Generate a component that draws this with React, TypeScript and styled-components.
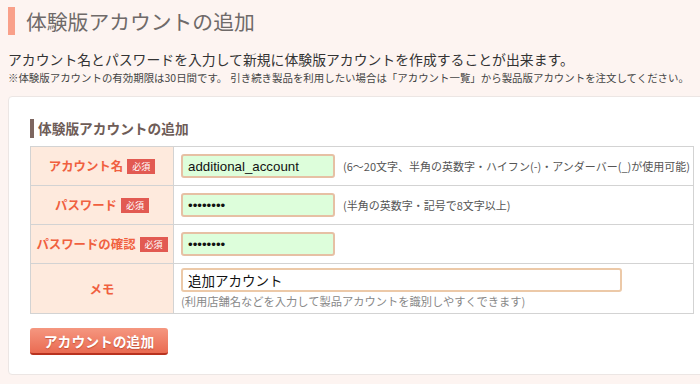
import React from "react";
import styled, { createGlobalStyle } from "styled-components";

const GlobalStyle = createGlobalStyle`
  html, body {
    margin: 0;
    padding: 0;
    background: #fdf4f1;
    overflow: hidden;
  }
  body {
    font-family: "Noto Sans CJK JP", "Noto Sans", sans-serif;
    color: #333;
  }
`;

const Page = styled.div`
  width: 700px;
  height: 384px;
  padding: 7px 0 0 8px;
  box-sizing: border-box;
`;

const PageTitle = styled.h1`
  margin: 0;
  border-left: 7px solid #f9a08a;
  padding-left: 11px;
  height: 28px;
  font-size: 20.8px;
  line-height: 28px;
  font-weight: 400;
  color: #6f6a69;
`;

const Lead = styled.p`
  margin: 14px 0 0;
  font-size: 13.85px;
  line-height: 20px;
  color: #333;
`;

const Note = styled.p`
  margin: 0;
  font-size: 10.45px;
  line-height: 17px;
  color: #444;
  white-space: nowrap;
`;

const Gap = styled.span`
  display: inline-block;
  width: 3px;
`;

const Card = styled.section`
  margin-top: 10px;
  width: 700px;
  background: #fff;
  border: 1px solid #ece6e4;
  border-radius: 4px;
  padding: 22px 0 19px 21px;
  box-sizing: border-box;
`;

const SectionTitle = styled.h2`
  margin: 0;
  height: 19px;
  border-left: 4px solid #7d6660;
  padding-left: 4px;
  font-size: 13.7px;
  line-height: 19px;
  font-weight: 700;
  color: #6e5c57;
`;

const FormTable = styled.table`
  margin-top: 8px;
  width: 664px;
  border-collapse: collapse;
  border: 1px solid #d3d3d3;
`;

const Row = styled.tr<{ $h: number }>`
  height: ${(p) => p.$h}px;
`;

const LabelCell = styled.th`
  width: 142px;
  padding: 0;
  background: #feeadd;
  border: 1px solid #d3d3d3;
  text-align: center;
  vertical-align: middle;
  font-size: 12.4px;
  font-weight: 700;
  color: #f0603f;
  white-space: nowrap;
`;

const Required = styled.span`
  display: inline-block;
  margin-left: 4px;
  padding: 0 5px;
  height: 15px;
  line-height: 15px;
  background: #e25a52;
  color: #fff;
  font-size: 9px;
  font-weight: 400;
  vertical-align: 1px;
`;

const ValueCell = styled.td`
  padding: 0 0 0 7px;
  border: 1px solid #d3d3d3;
  vertical-align: middle;
`;

const MemoCell = styled(ValueCell)`
  vertical-align: top;
  padding-top: 3px;
`;

const InlineField = styled.div`
  display: flex;
  align-items: center;
  gap: 8px;
`;

const TextInput = styled.input<{ $w: number; $memo?: boolean }>`
  width: ${(p) => p.$w}px;
  height: 24px;
  box-sizing: border-box;
  border: 2px solid ${(p) => (p.$memo ? "#ecc9a8" : "#e6c0a4")};
  border-radius: 3px;
  background: ${(p) => (p.$memo ? "#fff" : "#ddfedb")};
  padding: 0 5px;
  font-family: ${(p) =>
    p.$memo
      ? `"Noto Sans CJK JP", sans-serif`
      : `"Liberation Sans", Arial, sans-serif`};
  font-size: ${(p) => (p.$memo ? "13.5px" : "13.3px")};
  color: #111;
  outline: none;
`;

const Hint = styled.span`
  font-size: 11px;
  color: #555;
  white-space: nowrap;
`;

const SubHint = styled.div`
  margin-top: 1px;
  font-size: 11.25px;
  line-height: 16px;
  color: #888;
  white-space: nowrap;
`;

const SubmitButton = styled.button`
  margin-top: 14px;
  width: 138px;
  height: 27px;
  border: none;
  border-bottom: 2px solid #b8321f;
  border-radius: 3px;
  background: linear-gradient(#f59780, #ea6b52);
  color: #fff;
  font-family: "Noto Sans CJK JP", sans-serif;
  font-size: 13.8px;
  font-weight: 700;
  text-shadow: 0 1px 1px rgba(150, 40, 20, 0.5);
  padding: 0;
  cursor: pointer;
`;

export default function App() {
  return (
    <>
      <GlobalStyle />
      <Page>
        <PageTitle>体験版アカウントの追加</PageTitle>
        <Lead>
          アカウント名とパスワードを入力して新規に体験版アカウントを作成することが出来ます。
        </Lead>
        <Note>
          ※体験版アカウントの有効期限は30日間です。<Gap />
          引き続き製品を利用したい場合は「アカウント一覧」から製品版アカウントを注文してください。
        </Note>
        <Card>
          <SectionTitle>体験版アカウントの追加</SectionTitle>
          <FormTable>
            <tbody>
              <Row $h={39}>
                <LabelCell>
                  アカウント名<Required>必須</Required>
                </LabelCell>
                <ValueCell>
                  <InlineField>
                    <TextInput $w={154} defaultValue="additional_account" />
                    <Hint>
                      (6〜20文字、半角の英数字・ハイフン(-)・アンダーバー(_)が使用可能)
                    </Hint>
                  </InlineField>
                </ValueCell>
              </Row>
              <Row $h={39}>
                <LabelCell>
                  パスワード<Required>必須</Required>
                </LabelCell>
                <ValueCell>
                  <InlineField>
                    <TextInput $w={154} type="password" defaultValue="abcdefgh" />
                    <Hint>(半角の英数字・記号で8文字以上)</Hint>
                  </InlineField>
                </ValueCell>
              </Row>
              <Row $h={39}>
                <LabelCell>
                  パスワードの確認<Required>必須</Required>
                </LabelCell>
                <ValueCell>
                  <InlineField>
                    <TextInput $w={154} type="password" defaultValue="abcdefgh" />
                  </InlineField>
                </ValueCell>
              </Row>
              <Row $h={50}>
                <LabelCell>メモ</LabelCell>
                <MemoCell>
                  <TextInput $w={441} $memo defaultValue="追加アカウント" />
                  <SubHint>
                    (利用店舗名などを入力して製品アカウントを識別しやすくできます)
                  </SubHint>
                </MemoCell>
              </Row>
            </tbody>
          </FormTable>
          <SubmitButton type="button">アカウントの追加</SubmitButton>
        </Card>
      </Page>
    </>
  );
}
